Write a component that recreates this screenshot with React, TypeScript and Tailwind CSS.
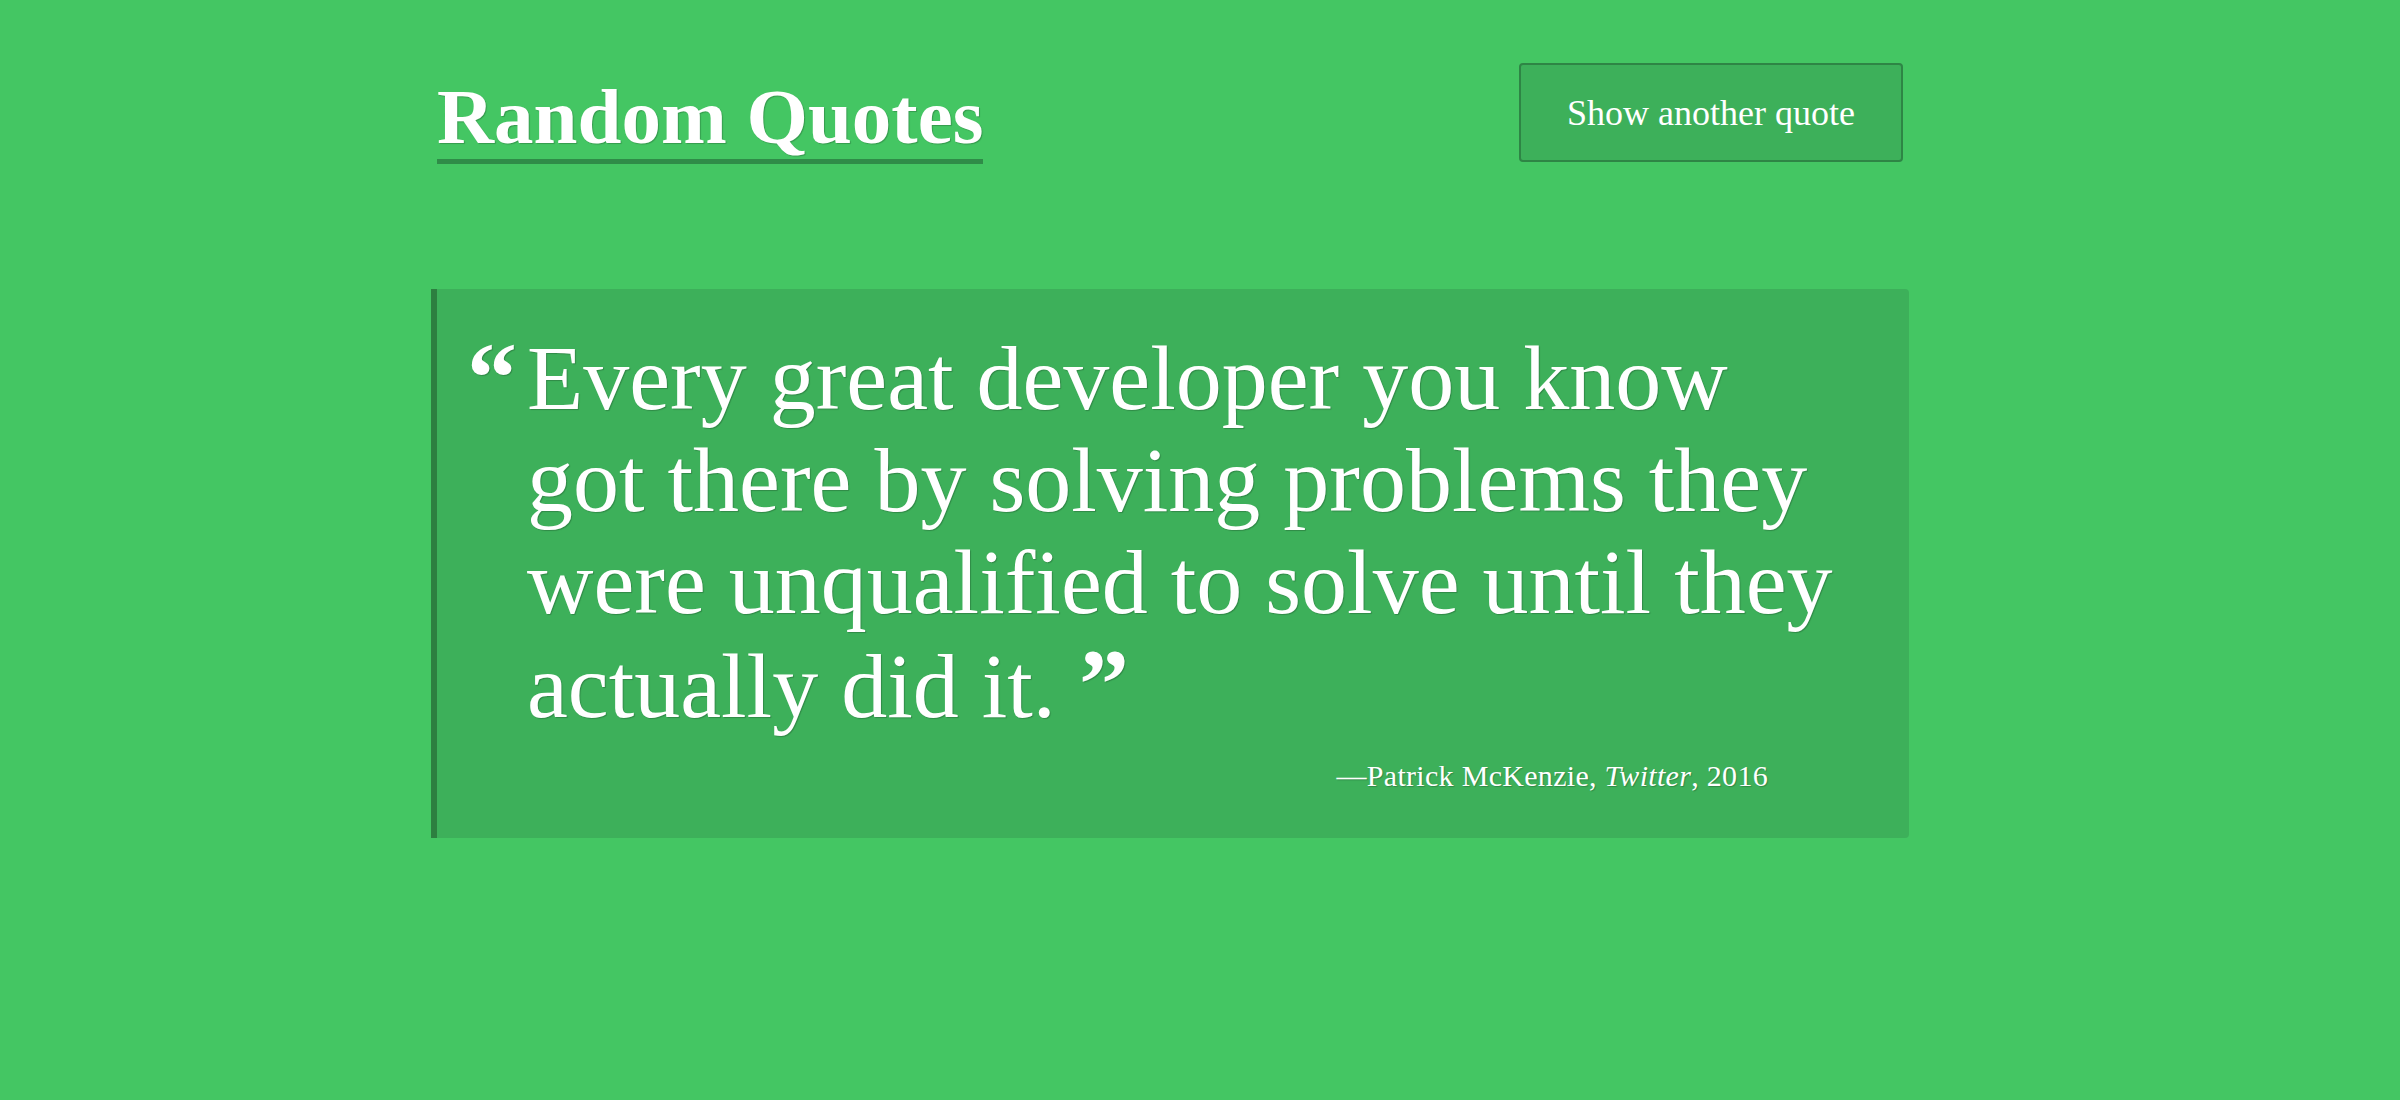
import React from "react";

export default function App() {
  return (
    <div className="min-h-screen w-full bg-[#44c663] font-['Liberation_Serif',serif] text-white [text-shadow:1px_1px_1px_rgba(0,0,0,0.22)]">
      <div className="ml-[431px] w-[1478px] pt-[63px]">
        <header className="flex h-[99px] items-start justify-between px-[6px]">
          <h1 className="mt-[14px] border-b-[5px] border-[#2f8c48] pb-[3px] text-[79px] font-bold leading-none">
            Random Quotes
          </h1>
          <button className="flex h-[99px] w-[384px] items-center justify-center rounded-[4px] border-2 border-[#2e8545] bg-[#3db05a] text-[36px] leading-none text-white">
            Show another quote
          </button>
        </header>

        <blockquote className="mt-[127px] rounded-r-[4px] border-l-[6px] border-[#2d7f40] bg-[#3db05a] pb-[40px] pl-[30px] pt-[38px]">
          <div className="flex">
            <span className="w-[60px] shrink-0 text-[100px] font-bold leading-[102px]">“</span>
            <p className="text-[92px] leading-[102px] whitespace-nowrap">
              Every great developer you know
              <br />
              got there by solving problems they
              <br />
              were unqualified to solve until they
              <br />
              actually did it. <span className="text-[100px] font-bold">”</span>
            </p>
          </div>
          <div className="mt-[16px] flex justify-end pr-[141px]">
            <cite className="text-[30px] not-italic leading-[45px] tracking-[0.3px]">
              —Patrick McKenzie, <i>Twitter</i>, 2016
            </cite>
          </div>
        </blockquote>
      </div>
    </div>
  );
}
